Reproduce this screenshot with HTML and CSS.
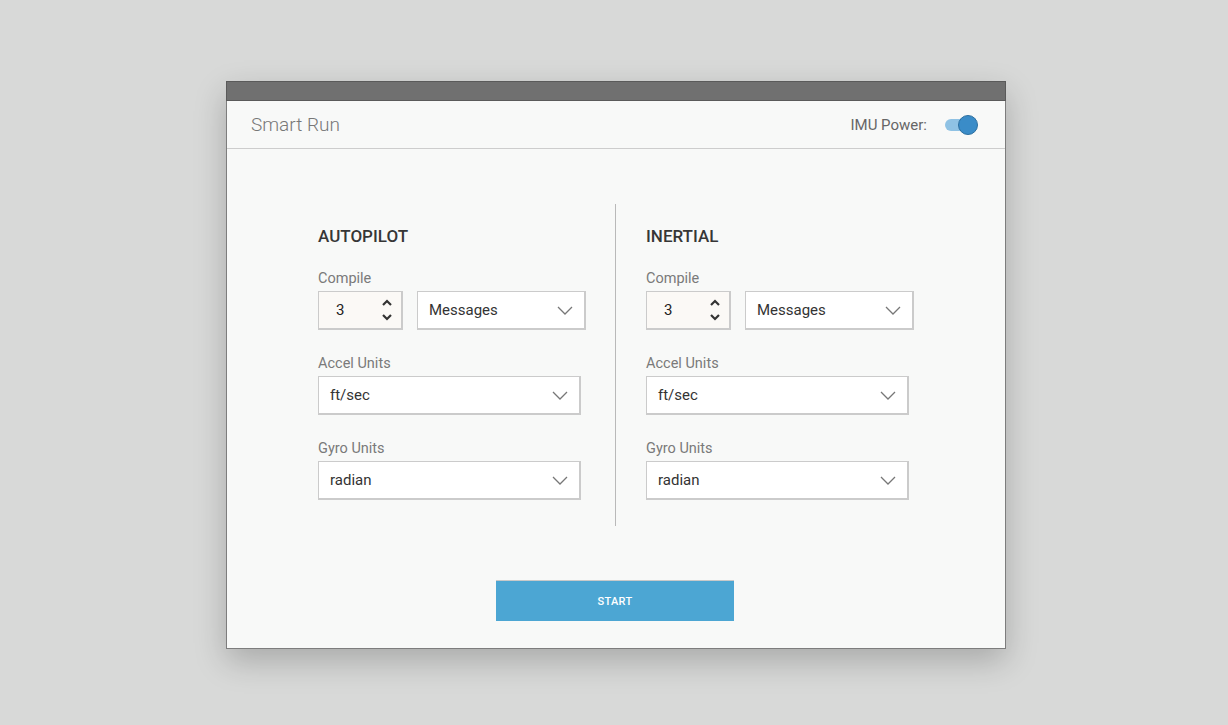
FILE: index.html
```html
<!DOCTYPE html>
<html>
<head>
<meta charset="utf-8">
<link rel="stylesheet" href="styles.css">
</head>
<body>
<div class="page">
  <div class="card">
    <div class="topbar"></div>
    <div class="header">
      <div class="title">Smart Run</div>
      <div class="power">
        <span class="power-label">IMU Power:</span>
        <span class="toggle"><span class="knob"></span></span>
      </div>
    </div>
    <div class="content">
      <div class="columns">
        <div class="col">
          <div class="heading">AUTOPILOT</div>
          <div class="label">Compile</div>
          <div class="row">
            <div class="num">
              <span class="num-val">3</span>
              <span class="spin">
                <svg width="12" height="26" viewBox="0 0 12 26"><path d="M2 8 L6 4 L10 8" fill="none" stroke="#333" stroke-width="2.2"/><path d="M2 18 L6 22 L10 18" fill="none" stroke="#333" stroke-width="2.2"/></svg>
              </span>
            </div>
            <div class="select sel-short"><span>Messages</span><svg class="chev" width="16" height="9" viewBox="0 0 16 9"><path d="M1 1 L8 8 L15 1" fill="none" stroke="#777" stroke-width="1.3"/></svg></div>
          </div>
          <div class="label lbl-gap">Accel Units</div>
          <div class="select sel-wide"><span>ft/sec</span><svg class="chev" width="16" height="9" viewBox="0 0 16 9"><path d="M1 1 L8 8 L15 1" fill="none" stroke="#777" stroke-width="1.3"/></svg></div>
          <div class="label lbl-gap">Gyro Units</div>
          <div class="select sel-wide"><span>radian</span><svg class="chev" width="16" height="9" viewBox="0 0 16 9"><path d="M1 1 L8 8 L15 1" fill="none" stroke="#777" stroke-width="1.3"/></svg></div>
        </div>
        <div class="divider"></div>
        <div class="col">
          <div class="heading">INERTIAL</div>
          <div class="label">Compile</div>
          <div class="row">
            <div class="num">
              <span class="num-val">3</span>
              <span class="spin">
                <svg width="12" height="26" viewBox="0 0 12 26"><path d="M2 8 L6 4 L10 8" fill="none" stroke="#333" stroke-width="2.2"/><path d="M2 18 L6 22 L10 18" fill="none" stroke="#333" stroke-width="2.2"/></svg>
              </span>
            </div>
            <div class="select sel-short"><span>Messages</span><svg class="chev" width="16" height="9" viewBox="0 0 16 9"><path d="M1 1 L8 8 L15 1" fill="none" stroke="#777" stroke-width="1.3"/></svg></div>
          </div>
          <div class="label lbl-gap">Accel Units</div>
          <div class="select sel-wide"><span>ft/sec</span><svg class="chev" width="16" height="9" viewBox="0 0 16 9"><path d="M1 1 L8 8 L15 1" fill="none" stroke="#777" stroke-width="1.3"/></svg></div>
          <div class="label lbl-gap">Gyro Units</div>
          <div class="select sel-wide"><span>radian</span><svg class="chev" width="16" height="9" viewBox="0 0 16 9"><path d="M1 1 L8 8 L15 1" fill="none" stroke="#777" stroke-width="1.3"/></svg></div>
        </div>
      </div>
      <div class="actions">
        <button class="start">START</button>
      </div>
    </div>
  </div>
</div>
</body>
</html>
```

FILE: styles.css
```css
* { box-sizing: border-box; }
html, body {
  margin: 0;
  padding: 0;
  background: #d8d9d8;
  font-family: Roboto, "Liberation Sans", sans-serif;
}
.page {
  width: 1228px;
  height: 725px;
  padding-top: 81px;
  padding-left: 226px;
}
.card {
  width: 780px;
  height: 568px;
  background: #f8f9f8;
  border: 1px solid #7d7d7d;
  border-top: none;
  box-shadow: 0 12px 30px rgba(0,0,0,0.22);
  display: flex;
  flex-direction: column;
}
.topbar {
  height: 20px;
  background: #707070;
  border: 1px solid #5a5a5a;
  margin: 0 -1px;
}
.header {
  height: 48px;
  border-bottom: 1px solid #cdcdcd;
  display: flex;
  align-items: center;
  justify-content: space-between;
  padding: 0 29px 0 24px;
}
.title {
  font-size: 19px;
  font-weight: 300;
  color: #777;
}
.power {
  display: flex;
  align-items: center;
  gap: 18px;
}
.power-label {
  font-size: 15px;
  color: #666;
}
.toggle {
  position: relative;
  width: 31px;
  height: 12px;
  border-radius: 6px;
  background: #8fc2e4;
}
.knob {
  position: absolute;
  right: -2px;
  top: -4px;
  width: 20px;
  height: 20px;
  border-radius: 50%;
  background: #3a8cc8;
  border: 1px solid #2c6f9f;
}
.content {
  flex: 1;
  display: flex;
  flex-direction: column;
  align-items: center;
  padding-top: 55px;
}
.columns {
  display: flex;
  height: 322px;
}
.col {
  width: 268px;
  padding-top: 22px;
}
.divider {
  width: 1px;
  background: #b9b9b9;
  margin: 0 30px 0 29px;
}
.heading {
  font-size: 17px;
  font-weight: 500;
  color: #363636;
  line-height: 20px;
  margin-bottom: 25px;
}
.label {
  font-size: 14.5px;
  line-height: 16px;
  color: #7a7a7a;
  margin-bottom: 4px;
}
.lbl-gap {
  margin-top: 26px;
}
.row {
  display: flex;
  gap: 14px;
}
.num {
  width: 85px;
  height: 39px;
  background: #fbf9f6;
  border: 1px solid #cbcbcb;
  border-right-width: 2px;
  border-bottom-width: 2px;
  display: flex;
  align-items: center;
  justify-content: space-between;
  padding: 0 8px 0 17px;
}
.num-val {
  font-size: 15px;
  color: #222;
}
.spin {
  display: flex;
}
.select {
  height: 39px;
  background: #fff;
  border: 1px solid #cbcbcb;
  border-right-width: 2px;
  border-bottom-width: 2px;
  display: flex;
  align-items: center;
  justify-content: space-between;
  padding: 0 11px 0 11px;
  font-size: 15px;
  color: #333;
}
.sel-short { width: 169px; }
.sel-wide { width: 263px; }
.chev { display: block; }
.actions {
  margin-top: 54px;
  margin-right: 2px;
}
.start {
  width: 238px;
  height: 41px;
  border: none;
  border-top: 1px solid #c9c9c9;
  background: #4ca6d3;
  color: #fff;
  font-family: Roboto, "Liberation Sans", sans-serif;
  font-size: 11px;
  font-weight: 500;
  letter-spacing: 0.3px;
}
```
